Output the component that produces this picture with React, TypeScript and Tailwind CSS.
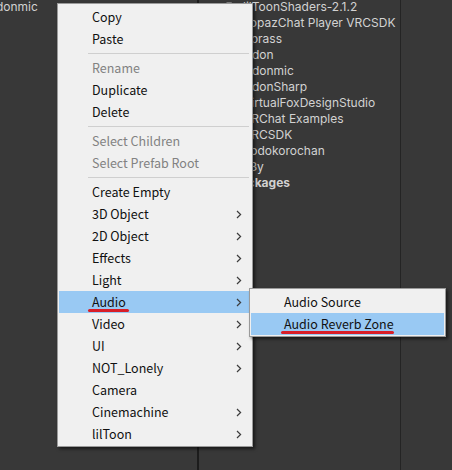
import React from "react";

type Item =
  | { kind: "sep" }
  | { kind: "item"; label: string; disabled?: boolean; sub?: boolean; active?: boolean };

const mainItems: Item[] = [
  { kind: "item", label: "Copy" },
  { kind: "item", label: "Paste" },
  { kind: "sep" },
  { kind: "item", label: "Rename", disabled: true },
  { kind: "item", label: "Duplicate" },
  { kind: "item", label: "Delete" },
  { kind: "sep" },
  { kind: "item", label: "Select Children", disabled: true },
  { kind: "item", label: "Select Prefab Root", disabled: true },
  { kind: "sep" },
  { kind: "item", label: "Create Empty" },
  { kind: "item", label: "3D Object", sub: true },
  { kind: "item", label: "2D Object", sub: true },
  { kind: "item", label: "Effects", sub: true },
  { kind: "item", label: "Light", sub: true },
  { kind: "item", label: "Audio", sub: true, active: true },
  { kind: "item", label: "Video", sub: true },
  { kind: "item", label: "UI", sub: true },
  { kind: "item", label: "NOT_Lonely", sub: true },
  { kind: "item", label: "Camera" },
  { kind: "item", label: "Cinemachine", sub: true },
  { kind: "item", label: "lilToon", sub: true },
];

const audioItems: Item[] = [
  { kind: "item", label: "Audio Source" },
  { kind: "item", label: "Audio Reverb Zone", active: true },
];

const folders = [
  "lilToonShaders-2.1.2",
  "TopazChat Player VRCSDK",
  "Sprass",
  "Udon",
  "Udonmic",
  "UdonSharp",
  "VirtualFoxDesignStudio",
  "VRChat Examples",
  "VRCSDK",
  "Yodokorochan",
  "z3y",
];

const menuFont = { fontFamily: '"Noto Sans CJK JP", "Noto Sans", sans-serif' };
const editorFont = { fontFamily: 'Inter, "Noto Sans", sans-serif' };

function Chevron() {
  return (
    <svg width="6" height="9" viewBox="0 0 6 9" className="absolute right-[9px] top-[7px]">
      <path d="M1 1 L4.6 4.5 L1 8" fill="none" stroke="#3c3c3c" strokeWidth="1.2" />
    </svg>
  );
}

function FolderIcon() {
  return (
    <svg width="14" height="12" viewBox="0 0 14 12" className="shrink-0">
      <path d="M0.5 1.5 h5 l1.5 1.5 h6.5 v8.5 h-13 z" fill="#c2c2c2" />
    </svg>
  );
}

function MenuList({ items }: { items: Item[] }) {
  return (
    <div
      className="flex flex-col border border-[#9a9a9a] bg-[#f0f0f0] px-[1px] pt-[2px] pb-[1px] shadow-[2px_2px_3px_rgba(0,0,0,0.55)]"
      style={menuFont}
    >
      {items.map((it, i) =>
        it.kind === "sep" ? (
          <div key={i} className="h-[7px] flex items-center pl-[29px] pr-[2px]">
            <div className="h-px w-full bg-[#cfcfcf]" />
          </div>
        ) : (
          <div
            key={i}
            className={`relative h-[22px] flex items-center pl-[33px] text-[12.5px] leading-none ${
              it.active ? "bg-[#99c9f3]" : ""
            } ${it.disabled ? "text-[#828282]" : "text-[#111111]"}`}
          >
            {it.label}
            {it.sub && <Chevron />}
          </div>
        )
      )}
    </div>
  );
}

export default function App() {
  return (
    <div className="relative flex h-[470px] w-[452px] overflow-hidden bg-[#383838]" style={editorFont}>
      {/* Hierarchy */}
      <div className="w-[197px] shrink-0 overflow-hidden">
        <div className="mt-[-1px] flex h-[16px] items-center ml-[-13px] text-[12px] text-[#d2d2d2]">
          Udonmic
        </div>
      </div>
      <div className="w-[2px] shrink-0 bg-[#1c1c1c]" />

      {/* Project folders */}
      <div className="w-[201px] shrink-0 overflow-hidden">
        <div className="mt-[-1px] flex flex-col">
          {folders.map((f) => (
            <div key={f} className="flex h-[16px] items-center gap-[3px] pl-[27px] text-[12px] text-[#d2d2d2] whitespace-nowrap">
              <FolderIcon />
              <span>{f}</span>
            </div>
          ))}
          <div className="flex h-[16px] items-center gap-[3px] pl-[17px] text-[12px] font-bold text-[#d2d2d2]">
            <FolderIcon />
            <span>Packages</span>
          </div>
        </div>
      </div>
      <div className="w-px shrink-0 bg-[#242424]" />
      <div className="flex-1" />

      {/* Context menu */}
      <div className="absolute left-[57px] top-[3px] w-[196px]">
        <MenuList items={mainItems} />
      </div>

      {/* Audio submenu */}
      <div className="absolute left-[249px] top-[288px] w-[197px]">
        <MenuList items={audioItems} />
      </div>

      {/* Red marker strokes */}
      <div className="absolute left-[88px] top-[309px] h-[3px] w-[41px] rounded-full bg-[#d81e28]" />
      <div className="absolute left-[281px] top-[331px] h-[3px] w-[113px] rounded-full bg-[#d81e28]" />
    </div>
  );
}
